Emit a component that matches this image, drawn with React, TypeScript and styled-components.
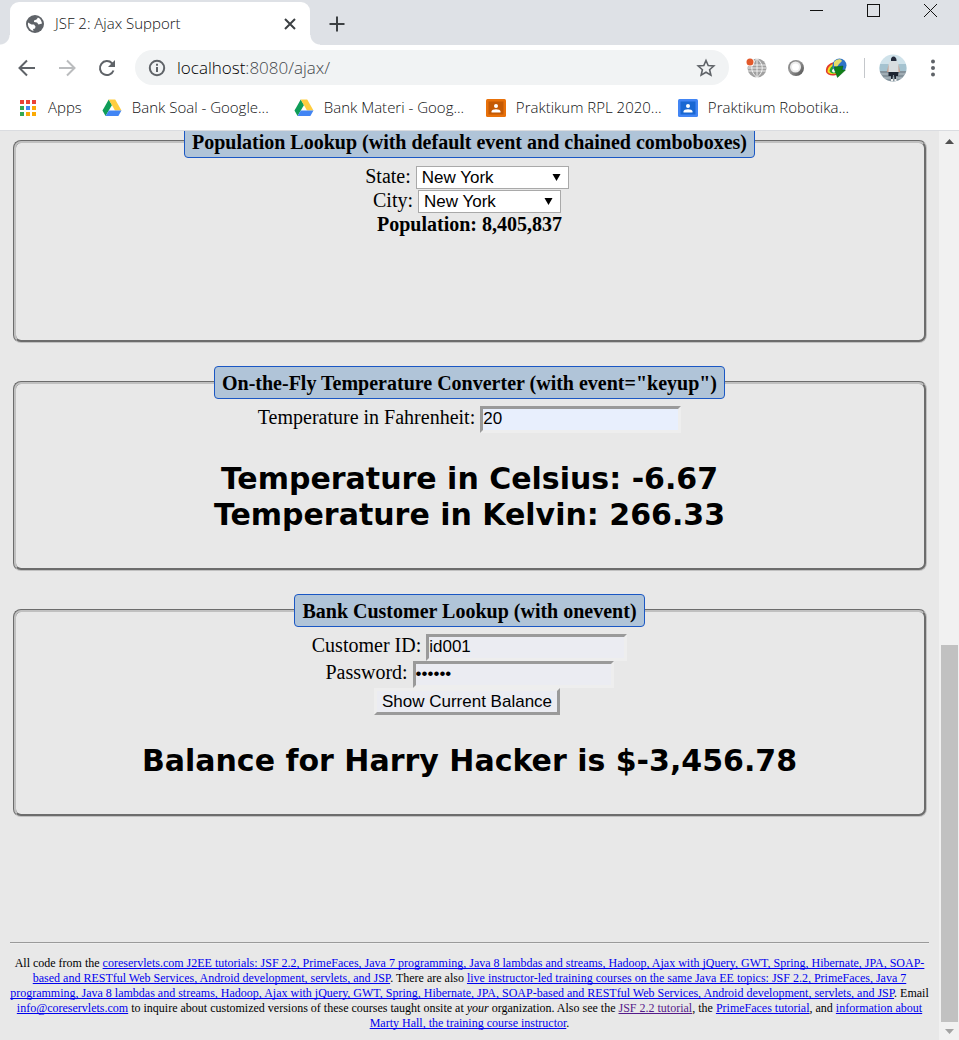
import React from "react";
import styled, { createGlobalStyle } from "styled-components";

const uiFont = '"Open Sans", "Noto Sans", sans-serif';
const serif = '"Liberation Serif", "Times New Roman", serif';
const sans = '"Liberation Sans", Arial, sans-serif';
const wide = 'Verdana, "DejaVu Sans", sans-serif';

const GlobalStyle = createGlobalStyle`
  *, *::before, *::after { box-sizing: border-box; }
  body { margin: 0; background: #e8e8e8; }
`;

const Window = styled.div`
  display: flex;
  flex-direction: column;
  min-height: 100vh;
`;

const TabStrip = styled.header`
  display: flex;
  align-items: flex-end;
  height: 45px;
  padding-left: 10px;
  background: #dee1e6;
  font-family: ${uiFont};
`;

const Tab = styled.div`
  position: relative;
  display: flex;
  align-items: center;
  width: 300px;
  height: 43px;
  padding: 0 12px 0 15px;
  border-radius: 9px 9px 0 0;
  background: #fff;
  color: #111214;
  font-size: 15px;
  font-weight: 300;

  &::before,
  &::after {
    content: "";
    position: absolute;
    bottom: 0;
    width: 10px;
    height: 10px;
  }
  &::before {
    right: 100%;
    background: radial-gradient(circle at 0 0, transparent 9px, #fff 10px);
  }
  &::after {
    left: 100%;
    background: radial-gradient(circle at 100% 0, transparent 9px, #fff 10px);
  }
`;

const TabTitle = styled.span`
  flex: 1;
  margin-left: 10px;
  padding-bottom: 2px;
  white-space: nowrap;
`;

const IconButton = styled.button<{ $w?: number; $h?: number }>`
  display: flex;
  align-items: center;
  justify-content: center;
  flex: none;
  width: ${(p) => p.$w ?? 40}px;
  height: ${(p) => p.$h ?? 35}px;
  padding: 0;
  border: 0;
  background: none;
  color: #5f6368;
`;

const NewTab = styled(IconButton)`
  margin-left: 7px;
  color: #3c4043;
`;

const WindowControls = styled.div`
  display: flex;
  align-self: flex-start;
  margin-left: auto;
  button { color: #111; }
`;

const Toolbar = styled.div`
  display: flex;
  align-items: center;
  height: 45px;
  padding: 0 6px 0 7px;
  background: #fff;
  font-family: ${uiFont};
`;

const AddressBar = styled.div`
  display: flex;
  align-items: center;
  flex: 1;
  height: 35px;
  margin: 0 7px 0 8px;
  padding: 0 3px 0 13px;
  border-radius: 18px;
  background: #f1f3f4;
  color: #44474b;
  font-size: 17px;
`;

const Url = styled.span`
  flex: 1;
  margin-left: 11px;
  font-weight: 300;
  b { font-weight: 300; color: #000; }
`;

const Divider = styled.span`
  width: 1px;
  height: 20px;
  margin: 0 8px;
  background: #c4c7cb;
`;

const Bookmarks = styled.nav`
  display: flex;
  align-items: center;
  gap: 20px;
  height: 41px;
  padding: 0 17px 5px 18px;
  border-bottom: 1px solid #dadce0;
  background: #fff;
  font-family: ${uiFont};
`;

const Bookmark = styled.a<{ $w?: number }>`
  display: flex;
  align-items: center;
  flex: none;
  gap: 10px;
  width: ${(p) => (p.$w ? `${p.$w}px` : "auto")};
  color: #111214;
  font-size: 15px;
  font-weight: 300;
  text-decoration: none;
  white-space: nowrap;
  svg { flex: none; }
`;

const BookmarkLabel = styled.span`
  padding-bottom: 2px;
`;

const Viewport = styled.div`
  display: flex;
  flex: 1;
  overflow: hidden;
`;

/* The page is scrolled a little past the top of its first section. */
const Page = styled.main`
  flex: 1;
  min-width: 0;
  margin-top: -6px;
  padding: 0 10px;
  color: #000;
  font-family: ${serif};
  font-size: 20px;
  line-height: 22px;
  text-align: center;
`;

const Section = styled.fieldset<{ $body: number }>`
  min-width: 0;
  min-height: ${(p) => p.$body}px;
  margin: 0 2px 23px 3px;
  padding: 7px 16px 12px 15px;
  border: 3px groove #c0c0c0;
  border-radius: 8px;
`;

const Legend = styled.legend`
  margin: 0 auto;
  padding: 5px 7px 3px;
  border: 1px solid #1a57c4;
  border-radius: 4px;
  background: #b0c4d8;
  font-weight: bold;
  line-height: 23px;
`;

const Row = styled.div<{ $trail?: boolean }>`
  display: flex;
  align-items: baseline;
  justify-content: center;
  gap: 5px;
  padding-right: ${(p) => (p.$trail ? 5 : 0)}px;
`;

const SelectBox = styled.span<{ $w: number }>`
  position: relative;
  display: inline-flex;
  width: ${(p) => p.$w}px;
  svg {
    position: absolute;
    top: 8px;
    right: 8px;
    pointer-events: none;
  }
`;

const Select = styled.select`
  appearance: none;
  width: 100%;
  height: 23px;
  padding: 0 5px;
  border: 1px solid #a9a9a9;
  border-radius: 0;
  background: #fff;
  color: #000;
  font: 17px ${sans};
`;

const Field = styled.input<{ $fill?: string }>`
  width: 201px;
  height: 27px;
  padding: 0 0 1px;
  border: 3px solid;
  border-color: #9a9a9a #eee #eee #9a9a9a;
  background: ${(p) => p.$fill ?? "#ebecf2"};
  color: #000;
  font: 17px ${sans};
`;

const Submit = styled.button`
  height: 27px;
  padding: 0 5px;
  border: 3px solid;
  border-color: #eee #9a9a9a #9a9a9a #eee;
  background: #ebecf2;
  color: #000;
  font: 17px ${sans};
`;

const Result = styled.div`
  margin-top: 28px;
  font: bold 30px/36px ${wide};
`;

const Rule = styled.hr`
  height: 2px;
  margin: 125px 0 12px;
  border: 0;
  border-top: 1px solid #9a9a9a;
  border-bottom: 1px solid #eee;
`;

const Footer = styled.footer`
  padding-bottom: 8px;
  font-size: 12px;
  line-height: 15px;
`;

const Link = styled.a<{ $visited?: boolean }>`
  color: ${(p) => (p.$visited ? "#551a8b" : "#0000ee")};
  text-decoration-skip-ink: none;
`;

const Scrollbar = styled.div`
  display: flex;
  flex-direction: column;
  align-items: center;
  width: 20px;
  background: #f1f1f1;
`;

const Thumb = styled.div`
  flex: 377;
  width: 17px;
  background: #c1c1c1;
`;

const TrackAbove = styled.div`
  flex: 493;
`;

const Globe = () => (
  <svg width="20" height="20" viewBox="0 0 20 20">
    <circle cx="10" cy="10" r="9" fill="#5f6368" />
    <path d="M3 8.500L6.500 10.500L9 10.500L10.500 12.500L10 14.500L8 15L8.500 17L6 16C3.500 14 2.500 11 3 8.500Z M10.500 2.800L13 3.500L11.500 5.500L9 6.500L9 8L12 8.500L13.500 10.500L17 9.500C16.500 6 14 3 10.500 2.800Z" fill="#fff" />
  </svg>
);

const Arrow = ({ flip }: { flip?: boolean }) => (
  <svg width="18" height="18" viewBox="0 0 18 18" fill="none" stroke={flip ? "#babcbe" : "#5f6368"} strokeWidth="2">
    <path d={flip ? "M1 9H16M9 1.500L16.500 9L9 16.500" : "M17 9H2M9 1.500L1.500 9L9 16.500"} />
  </svg>
);

const Drive = () => (
  <svg width="20" height="18" viewBox="0 0 20 18">
    <path d="M6.700 0.500L0.500 11.500L3.600 17L10 6Z" fill="#0f9d58" />
    <path d="M6.700 0.500H13.200L19.500 11.500H13Z" fill="#ffcd40" />
    <path d="M6.800 11.500H19.500L16.400 17H3.600Z" fill="#4285f4" />
  </svg>
);

const Classroom = ({ outer, inner }: { outer: string; inner: string }) => (
  <svg width="20" height="18" viewBox="0 0 20 18">
    <rect width="20" height="18" rx="1.500" fill={outer} />
    <rect x="2.500" y="2.500" width="15" height="13" fill={inner} />
    <circle cx="10" cy="7" r="2" fill="#fff" />
    <path d="M5.500 13.500V12.500C5.500 9.500 14.500 9.500 14.500 12.500V13.500Z" fill="#fff" />
  </svg>
);

const appColors = ["#ea4335", "#ea4335", "#ea4335", "#34a853", "#4285f4", "#fbaa05", "#34a853", "#fbaa05", "#fbaa05"];

const Apps = () => (
  <svg width="20" height="18" viewBox="0 0 20 18">
    {appColors.map((c, i) => (
      <rect key={i} x={2 + (i % 3) * 6} y={1 + Math.floor(i / 3) * 6} width="4" height="4" fill={c} />
    ))}
  </svg>
);

const Caret = () => (
  <svg width="9" height="7" viewBox="0 0 9 7">
    <path d="M0.500 0H8.500L4.500 7Z" fill="#000" />
  </svg>
);

const ScrollArrow = ({ down }: { down?: boolean }) => (
  <svg width="9" height="5" viewBox="0 0 9 5">
    <path d={down ? "M0 0H9L4.500 5Z" : "M0 5H9L4.500 0Z"} fill={down ? "#a3a3a3" : "#505050"} />
  </svg>
);

const Avatar = () => (
  <svg width="28" height="28" viewBox="0 0 28 28">
    <defs>
      <clipPath id="face"><circle cx="14" cy="14" r="13.500" /></clipPath>
    </defs>
    <g clipPath="url(#face)">
      <rect width="28" height="28" fill="#cfe2ea" />
      <rect y="10" width="28" height="7" fill="#a5c3d0" />
      <rect y="17" width="28" height="11" fill="#84929b" />
      <path d="M0 20H28M0 24H28" stroke="#bcc6cc" />
      <path d="M9 18L9.500 10C10 7.500 12 6.500 14.500 6.500C17.500 6.500 19 7.500 19.500 10L20 18Z" fill="#d8dde0" />
      <path d="M9.500 10L8 18H9.500ZM19.500 10L21 18H19.500Z" fill="#c99b86" />
      <path d="M12 7C11 1 18 1 17.500 7Z" fill="#252b3c" />
      <path d="M9.500 18H19.500L19 22H17V25H15.500L15 21H14L13.500 25H12V22H9.500Z" fill="#1e2431" />
      <path d="M12 25H14V27.500H12ZM15.500 25H17.500V27.500H15.500Z" fill="#f2f2f2" />
    </g>
  </svg>
);

const WebGlobe = () => (
  <svg width="22" height="22" viewBox="0 0 22 22">
    <circle cx="12" cy="11" r="9.500" fill="#a0a0a0" />
    <path d="M2 8H22M2 14H22M12 1V21M3 11H21M12 1.500C5 7 5 15 12 20.500C19 15 19 7 12 1.500" fill="none" stroke="#fff" strokeWidth="0.800" />
    <circle cx="5" cy="5" r="4.500" fill="#fff" />
    <circle cx="5" cy="5" r="3.500" fill="#e2592b" />
  </svg>
);

const Ring = () => (
  <svg width="20" height="20" viewBox="0 0 20 20">
    <defs>
      <linearGradient id="metal" x2="1" y2="1">
        <stop stopColor="#777" /><stop offset="0.4" stopColor="#999" /><stop offset="1" stopColor="#4a4a4a" />
      </linearGradient>
    </defs>
    <circle cx="10" cy="10" r="8" fill="url(#metal)" />
    <circle cx="9.500" cy="9" r="5.500" fill="#ececec" />
    <circle cx="9.500" cy="9" r="3.500" fill="#fff" />
  </svg>
);

const Downloader = () => (
  <svg width="22" height="20" viewBox="0 0 22 20">
    <path d="M1 14C0 7 6 4 12 4L13 16C8 19 2 17 1 14Z" fill="#e23b2e" />
    <path d="M2.500 14C2 9 7 5 12 5L13 15C8 17 4 16 2.500 14Z" fill="#f7e11f" />
    <path d="M4.500 13C5 9 8 7 12 7L13 14C9 16 6 16 4.500 13Z" fill="#23a13a" />
    <path d="M7 13C7 11 9 10 11 10L12 13C10 15 8 15 7 13Z" fill="#fff" />
    <circle cx="14.500" cy="7.500" r="7" fill="#2f74c8" />
    <path d="M9 4C11 1 16 0 17 3L14 6L12 9L9 8Z" fill="#e6dc6a" />
    <path d="M9.500 9L18 8L17 12L20.500 12L12.500 19.500L10 13Z" fill="#118018" stroke="#075d10" strokeWidth="0.500" />
  </svg>
);

const bookmarks = [
  { label: "Apps", icon: <Apps /> },
  { label: "Bank Soal - Google...", icon: <Drive />, width: 172 },
  { label: "Bank Materi - Goog...", icon: <Drive />, width: 172 },
  { label: "Praktikum RPL 2020...", icon: <Classroom outer="#e8710a" inner="#c45a05" />, width: 172 },
  { label: "Praktikum Robotika...", icon: <Classroom outer="#4285f4" inner="#1967d2" />, width: 172 },
];

export default function App() {
  return (
    <>
      <GlobalStyle />
      <Window>
        <TabStrip>
          <Tab>
            <Globe />
            <TabTitle>JSF 2: Ajax Support</TabTitle>
            <IconButton $w={16} $h={16} aria-label="Close tab">
              <svg width="12" height="12" viewBox="0 0 12 12" stroke="#3c4043" strokeWidth="2"><path d="M1 1L11 11M11 1L1 11" /></svg>
            </IconButton>
          </Tab>
          <NewTab $h={43} aria-label="New tab">
            <svg width="16" height="16" viewBox="0 0 16 16" stroke="currentColor" strokeWidth="2"><path d="M8 0.500V15.500M0.500 8H15.500" /></svg>
          </NewTab>
          <WindowControls>
            <IconButton $w={57} $h={21} aria-label="Minimize">
              <svg width="13" height="13" viewBox="0 0 13 13" stroke="currentColor"><path d="M0 6.500H13" /></svg>
            </IconButton>
            <IconButton $w={57} $h={21} aria-label="Maximize">
              <svg width="13" height="13" viewBox="0 0 13 13" stroke="currentColor" fill="none"><rect x="0.500" y="0.500" width="12" height="12" /></svg>
            </IconButton>
            <IconButton $w={57} $h={21} aria-label="Close">
              <svg width="13" height="13" viewBox="0 0 13 13" stroke="currentColor"><path d="M0 0L13 13M13 0L0 13" /></svg>
            </IconButton>
          </WindowControls>
        </TabStrip>

        <Toolbar>
          <IconButton aria-label="Back"><Arrow /></IconButton>
          <IconButton aria-label="Forward"><Arrow flip /></IconButton>
          <IconButton aria-label="Reload">
            <svg width="18" height="18" viewBox="0 0 18 18">
              <path d="M15.500 11.500A7 7 0 1 1 14 4.200L15 5.200" fill="none" stroke="#5f6368" strokeWidth="2" />
              <path d="M17 1V8H10Z" fill="#5f6368" />
            </svg>
          </IconButton>
          <AddressBar>
            <svg width="18" height="18" viewBox="0 0 18 18" fill="none" stroke="#5f6368" strokeWidth="2">
              <circle cx="9" cy="9" r="7.200" /><path d="M9 8V13M9 4.800V6.800" />
            </svg>
            <Url><b>localhost</b>:8080/ajax/</Url>
            <IconButton aria-label="Bookmark this page">
              <svg width="20" height="20" viewBox="0 0 20 20" fill="none" stroke="#5f6368" strokeWidth="1.600">
                <path d="M10 2.500L12.200 7.500L17.800 8L13.600 11.700L14.900 17.200L10 14.300L5.100 17.200L6.400 11.700L2.200 8L7.800 7.500Z" />
              </svg>
            </IconButton>
          </AddressBar>
          <IconButton aria-label="Web extension"><WebGlobe /></IconButton>
          <IconButton aria-label="Ring extension"><Ring /></IconButton>
          <IconButton aria-label="Download manager"><Downloader /></IconButton>
          <Divider />
          <IconButton aria-label="Profile"><Avatar /></IconButton>
          <IconButton aria-label="Menu">
            <svg width="4" height="18" viewBox="0 0 4 18" fill="#5f6368"><circle cx="2" cy="2.500" r="2" /><circle cx="2" cy="9" r="2" /><circle cx="2" cy="15.500" r="2" /></svg>
          </IconButton>
        </Toolbar>

        <Bookmarks>
          {bookmarks.map((b) => (
            <Bookmark href="#" key={b.label} $w={b.width}>
              {b.icon}
              <BookmarkLabel>{b.label}</BookmarkLabel>
            </Bookmark>
          ))}
        </Bookmarks>

        <Viewport>
          <Page>
            <Section $body={218}>
              <Legend>Population Lookup (with default event and chained comboboxes)</Legend>
              <Row $trail>
                <label htmlFor="state">State:</label>
                <SelectBox $w={153}><Select id="state"><option>New York</option></Select><Caret /></SelectBox>
              </Row>
              <Row $trail>
                <label htmlFor="city">City:</label>
                <SelectBox $w={143}><Select id="city"><option>New York</option></Select><Caret /></SelectBox>
              </Row>
              <b>Population: 8,405,837</b>
            </Section>

            <Section $body={205}>
              <Legend>On-the-Fly Temperature Converter (with event="keyup")</Legend>
              <Row>
                <label htmlFor="temp">Temperature in Fahrenheit:</label>
                <Field id="temp" defaultValue="20" $fill="#e8effd" />
              </Row>
              <Result>
                Temperature in Celsius: -6.67<br />
                Temperature in Kelvin: 266.33
              </Result>
            </Section>

            <Section $body={223}>
              <Legend>Bank Customer Lookup (with onevent)</Legend>
              <Row>
                <label htmlFor="customer">Customer ID:</label>
                <Field id="customer" defaultValue="id001" />
              </Row>
              <Row>
                <label htmlFor="password">Password:</label>
                <Field id="password" type="password" defaultValue="secret" />
              </Row>
              <Row $trail><Submit type="button">Show Current Balance</Submit></Row>
              <Result>Balance for Harry Hacker is $-3,456.78</Result>
            </Section>

            <Rule />
            <Footer>
              All code from the <Link href="#">coreservlets.com J2EE tutorials: JSF 2.2, PrimeFaces, Java 7 programming, Java 8 lambdas and streams, Hadoop, Ajax with jQuery, GWT, Spring, Hibernate, JPA, SOAP-based and RESTful Web Services, Android development, servlets, and JSP</Link>. There are also <Link href="#">live instructor-led training courses on the same Java EE topics: JSF 2.2, PrimeFaces, Java 7 programming, Java 8 lambdas and streams, Hadoop, Ajax with jQuery, GWT, Spring, Hibernate, JPA, SOAP-based and RESTful Web Services, Android development, servlets, and JSP</Link>. Email <Link href="#">info@coreservlets.com</Link> to inquire about customized versions of these courses taught onsite at <i>your</i> organization. Also see the <Link href="#" $visited>JSF 2.2 tutorial</Link>, the <Link href="#">PrimeFaces tutorial</Link>, and <Link href="#">information about Marty Hall, the training course instructor</Link>.
            </Footer>
          </Page>
          <Scrollbar aria-hidden="true">
            <IconButton as="span" $w={20} $h={21}><ScrollArrow /></IconButton>
            <TrackAbove />
            <Thumb />
            <IconButton as="span" $w={20} $h={18}><ScrollArrow down /></IconButton>
          </Scrollbar>
        </Viewport>
      </Window>
    </>
  );
}
